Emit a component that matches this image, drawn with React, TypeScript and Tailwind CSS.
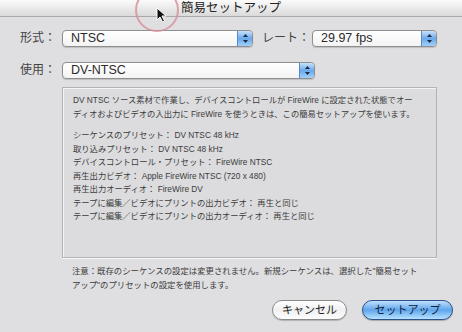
import React from "react"

const FONT = { fontFamily: '"Liberation Sans", "Noto Sans CJK JP", sans-serif' }

function Stepper() {
  return (
    <div className="flex h-full w-[15px] items-center justify-center rounded-r-[4px] border-l border-[#5b87c2] bg-gradient-to-b from-[#c8e2fb] via-[#6aa8ea] to-[#9fd0fb]">
      <svg width="7" height="11" viewBox="0 0 7 11">
        <path d="M3.5 1 L6 4 L1 4 Z" fill="#1b2a44" />
        <path d="M3.5 10 L6 7 L1 7 Z" fill="#1b2a44" />
      </svg>
    </div>
  )
}

function Select({ value, width }: { value: string; width: string }) {
  return (
    <div
      className={`flex h-[17px] items-center overflow-hidden rounded-[4px] border border-[#8e8e8e] bg-gradient-to-b from-[#ffffff] to-[#f3f3f3] shadow-[0_1px_1px_rgba(0,0,0,0.15)] ${width}`}
    >
      <span className="flex-1 pl-[8px] text-[12.5px] leading-none text-[#2a2a2a]">{value}</span>
      <Stepper />
    </div>
  )
}

const lines = [
  "DV NTSC ソース素材で作業し、デバイスコントロールが FireWire に設定された状態でオー",
  "ディオおよびビデオの入出力に FireWire を使うときは、この簡易セットアップを使います。",
]

const presets = [
  "シーケンスのプリセット： DV NTSC 48 kHz",
  "取り込みプリセット： DV NTSC 48 kHz",
  "デバイスコントロール・プリセット： FireWire NTSC",
  "再生出力ビデオ： Apple FireWire NTSC (720 x 480)",
  "再生出力オーディオ： FireWire DV",
  "テープに編集／ビデオにプリントの出力ビデオ： 再生と同じ",
  "テープに編集／ビデオにプリントの出力オーディオ： 再生と同じ",
]

export default function App() {
  return (
    <div className="relative h-[332px] w-[462px] overflow-hidden bg-[#dfdfe1]" style={FONT}>
      {/* title bar */}
      <div className="flex h-[17px] items-center justify-center border-b border-[#a9a9a9] bg-gradient-to-b from-[#fbfbfb] to-[#dadada]">
        <span className="text-[12.5px] leading-none text-[#222]">簡易セットアップ</span>
      </div>

      {/* format / rate */}
      <div className="mt-[12px] flex items-center">
        <span className="w-[56px] text-right text-[12px] text-[#444]">形式：</span>
        <div className="ml-[6px]">
          <Select value="NTSC" width="w-[191px]" />
        </div>
        <span className="ml-[9px] w-[50px] text-[12px] text-[#444]">レート：</span>
        <Select value="29.97 fps" width="w-[125px]" />
      </div>

      {/* use */}
      <div className="mt-[14px] flex items-center">
        <span className="w-[56px] text-right text-[12px] text-[#444]">使用：</span>
        <div className="ml-[6px]">
          <Select value="DV-NTSC" width="w-[253px]" />
        </div>
      </div>

      {/* description */}
      <div className="ml-[62px] mt-[8px] h-[171px] w-[375px] border border-[#b3b3b3] bg-[#dcdcde] px-[10px] pt-[6px] text-[8.3px] leading-[13.5px] text-[#3b3b3b] shadow-[inset_1px_1px_0_#f4f4f4,0_1px_0_#f7f7f7]">
        {lines.map((l) => (
          <div key={l} className="whitespace-nowrap">{l}</div>
        ))}
        <div className="h-[8px]" />
        {presets.map((l) => (
          <div key={l} className="whitespace-nowrap">{l}</div>
        ))}
      </div>

      {/* note */}
      <div className="ml-[72px] mt-[6px] text-[8.4px] leading-[14px] text-[#3b3b3b]">
        <div className="whitespace-nowrap">注意：既存のシーケンスの設定は変更されません。新規シーケンスは、選択した"簡易セット</div>
        <div className="whitespace-nowrap">アップ"のプリセットの設定を使用します。</div>
      </div>

      {/* buttons */}
      <div className="mt-[8px] flex justify-end gap-[15px] pr-[9px]">
        <button className="flex h-[20px] w-[75px] items-center justify-center rounded-full border border-[#8a8a8a] bg-gradient-to-b from-[#ffffff] via-[#f0f0f0] to-[#fdfdfd] text-[11px] leading-none text-[#222] shadow-[0_1px_1px_rgba(0,0,0,0.2)]">
          キャンセル
        </button>
        <button className="flex h-[20px] w-[91px] items-center justify-center rounded-full border border-[#2d4f8a] bg-gradient-to-b from-[#bfe0fb] via-[#5ea5ea] to-[#b6e2ff] text-[11px] leading-none text-[#0f1e3a] shadow-[0_1px_1px_rgba(0,0,0,0.25)]">
          セットアップ
        </button>
      </div>

      {/* cursor highlight */}
      <div className="absolute left-[135px] top-[-12px] h-[44px] w-[44px] rounded-full border-2 border-[#d88d9a]/80" />
      <svg className="absolute left-[156px] top-[7px]" width="11" height="16" viewBox="0 0 11 16">
        <path d="M1 1 L1 13 L4 10 L6.5 15 L8.5 14 L6 9 L10 9 Z" fill="#111" stroke="#fff" strokeWidth="1" />
      </svg>
    </div>
  )
}
